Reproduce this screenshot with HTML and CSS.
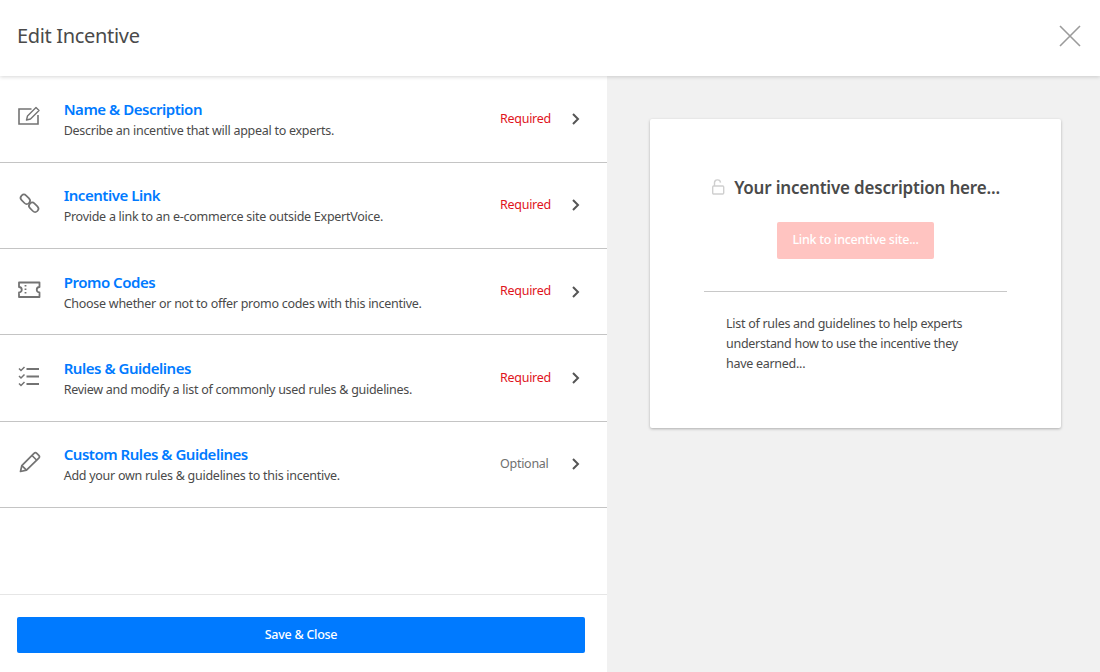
FILE: index.html
```html
<!DOCTYPE html>
<html lang="en">
<head>
<meta charset="utf-8">
<title>Edit Incentive</title>
<link rel="stylesheet" href="styles.css">
</head>
<body>
<div class="app">
  <header class="top">
    <h1 class="top-title">Edit Incentive</h1>
    <svg class="close" width="24" height="24" viewBox="0 0 24 24"><path d="M2 2l20 20M22 2L2 22" fill="none" stroke="#9b9b9b" stroke-width="1.6"/></svg>
  </header>
  <div class="main">
    <section class="left">
      <div class="rows">
        <a class="row">
          <svg class="ico" width="24" height="24" viewBox="0 0 24 24" fill="none" stroke="#737373" stroke-width="1.6"><path d="M14.500 4H2v15h19V10"/><path d="M9.500 15l1-4 8.500-8.500 3 3-8.500 8.500z" stroke-width="1.400" stroke-linejoin="round"/></svg>
          <div class="txt"><div class="name">Name &amp; Description</div><div class="desc">Describe an incentive that will appeal to experts.</div></div>
          <span class="status req">Required</span>
          <svg class="chev" width="10" height="14" viewBox="0 0 10 14"><path d="M2 2l5 5-5 5" fill="none" stroke="#555" stroke-width="2"/></svg>
        </a>
        <a class="row">
          <svg class="ico" width="24" height="24" viewBox="0 0 24 24" fill="none" stroke="#737373" stroke-width="1.700"><rect x="3.050" y="5.050" width="10.500" height="6.500" rx="3.250" transform="rotate(45 8.300 8.300)"/><rect x="11.450" y="13.050" width="10.500" height="6.500" rx="3.250" transform="rotate(45 16.700 16.300)"/></svg>
          <div class="txt"><div class="name">Incentive Link</div><div class="desc">Provide a link to an e-commerce site outside ExpertVoice.</div></div>
          <span class="status req">Required</span>
          <svg class="chev" width="10" height="14" viewBox="0 0 10 14"><path d="M2 2l5 5-5 5" fill="none" stroke="#555" stroke-width="2"/></svg>
        </a>
        <a class="row">
          <svg class="ico" width="24" height="24" viewBox="0 0 24 24" fill="none" stroke="#737373" stroke-width="1.800"><path d="M2 4.500h20.500v4.500a2.700 2.700 0 0 0 0 5.500v4.500H2v-4.500a2.700 2.700 0 0 0 0-5.500z" stroke-linejoin="round"/><path d="M8.500 7v10" stroke-dasharray="1.500 2"/></svg>
          <div class="txt"><div class="name">Promo Codes</div><div class="desc">Choose whether or not to offer promo codes with this incentive.</div></div>
          <span class="status req">Required</span>
          <svg class="chev" width="10" height="14" viewBox="0 0 10 14"><path d="M2 2l5 5-5 5" fill="none" stroke="#555" stroke-width="2"/></svg>
        </a>
        <a class="row">
          <svg class="ico" width="24" height="24" viewBox="0 0 24 24" fill="none" stroke="#737373" stroke-width="1.500"><path d="M9.500 5H22M9.500 12.500H22M9.500 20H22" stroke-width="1.800"/><path d="M2 4.500l2 2 3.500-3.500M2 12l2 2 3.500-3.500M2 19.500l2 2 3.500-3.500"/></svg>
          <div class="txt"><div class="name">Rules &amp; Guidelines</div><div class="desc">Review and modify a list of commonly used rules &amp; guidelines.</div></div>
          <span class="status req">Required</span>
          <svg class="chev" width="10" height="14" viewBox="0 0 10 14"><path d="M2 2l5 5-5 5" fill="none" stroke="#555" stroke-width="2"/></svg>
        </a>
        <a class="row">
          <svg class="ico" width="24" height="24" viewBox="0 0 24 24" fill="none" stroke="#737373" stroke-width="1.700"><path d="M3.500 21.500l1.300-5.800L17 3.300a2 2 0 0 1 2.800 0l2 2a2 2 0 0 1 0 2.800L9.500 20.200z" stroke-linejoin="round"/><path d="M15 5.500l4.500 4.500M4.800 15.700L9.500 20.200"/></svg>
          <div class="txt"><div class="name">Custom Rules &amp; Guidelines</div><div class="desc">Add your own rules &amp; guidelines to this incentive.</div></div>
          <span class="status opt">Optional</span>
          <svg class="chev" width="10" height="14" viewBox="0 0 10 14"><path d="M2 2l5 5-5 5" fill="none" stroke="#555" stroke-width="2"/></svg>
        </a>
      </div>
      <footer class="foot"><button class="save">Save &amp; Close</button></footer>
    </section>
    <aside class="right">
      <div class="card">
        <div class="head">
          <svg class="lock" width="14" height="16" viewBox="0 0 14 16" fill="none" stroke="#cfcfcf" stroke-width="1.400"><rect x="1.700" y="7" width="11" height="8" rx="1"/><path d="M3.500 7V4.200a3 3 0 0 1 6-.6"/></svg>
          <span class="head-text">Your incentive description here...</span>
        </div>
        <div class="cta">Link to incentive site...</div>
        <hr class="sep">
        <p class="rules">List of rules and guidelines to help experts understand how to use the incentive they have earned...</p>
      </div>
    </aside>
  </div>
</div>
</body>
</html>
```
FILE: styles.css
```css
* { box-sizing: border-box; }
html, body { margin: 0; height: 100%; }
body { font-family: "Noto Sans", "Open Sans", sans-serif; color: #4a4a4a; background: #fff; overflow: hidden; }
.app { width: 1100px; height: 672px; display: flex; flex-direction: column; }
.top { height: 76px; flex: none; display: flex; align-items: center; justify-content: space-between; padding: 0 18px 4px 17px; background: #fff; box-shadow: 0 1px 4px rgba(0,0,0,.16); position: relative; z-index: 1; }
.top-title { margin: 0 0 1px; font-size: 20px; font-weight: 400; color: #4a4a4a; letter-spacing: -.33px; }
.close { display: block; }
.main { flex: 1; display: flex; min-height: 0; }
.left { width: 607px; flex: none; display: flex; flex-direction: column; background: #fff; }
.rows { flex: 1; padding-top: .4px; }
.row { height: 86.33px; display: flex; align-items: center; padding: 0 26px 0 17px; border-bottom: 1px solid #c4c4c4; }
.ico { flex: none; margin: 0 22.7px 4px 0; }
.txt { flex: 1; min-width: 0; padding-top: 2px; }
.name { font-size: 15px; line-height: 20px; font-weight: 600; color: #007aff; letter-spacing: -.47px; margin-bottom: 2px; }
.desc { font-size: 12.5px; line-height: 20px; color: #4a4a4a; letter-spacing: -.27px; }
.status { font-size: 12.5px; line-height: 18px; letter-spacing: -.27px; width: 71px; flex: none; padding-bottom: 1px; height: 19px; }
.req { color: #e0141c; }
.opt { color: #6f6f6f; }
.chev { flex: none; }
.foot { height: 78px; flex: none; border-top: 1px solid #e6e6e6; padding: 22px 22px 0 17px; }
.save { width: 100%; height: 36px; border: 0; border-radius: 2px; background: #007aff; color: #fff; font-family: inherit; font-size: 12.5px; font-weight: 500; letter-spacing: -.27px; padding: 0 0 2px; }
.right { flex: 1; background: #f1f1f1; padding: 43px 39px 0 43px; }
.card { height: 309px; background: #fff; border-radius: 2px; box-shadow: 0 1px 3px rgba(0,0,0,.28); padding: 55px 54px 0; }
.head { display: flex; align-items: center; justify-content: center; gap: 9px; height: 26px; }
.head-text { font-size: 17px; font-weight: 600; color: #4a4a4a; letter-spacing: -.2px; white-space: nowrap; }
.cta { width: 157px; height: 37px; margin: 22px auto 0; padding-bottom: 2px; background: #ffc4c1; color: #fff; border-radius: 2px; font-size: 12.5px; font-weight: 500; letter-spacing: -.27px; display: flex; align-items: center; justify-content: center; }
.sep { border: 0; border-top: 1px solid #c8c8c8; margin: 32px 0 0; }
.rules { margin: 22px 22px 0; font-size: 12.5px; line-height: 20px; letter-spacing: -.28px; color: #4a4a4a; }
```
